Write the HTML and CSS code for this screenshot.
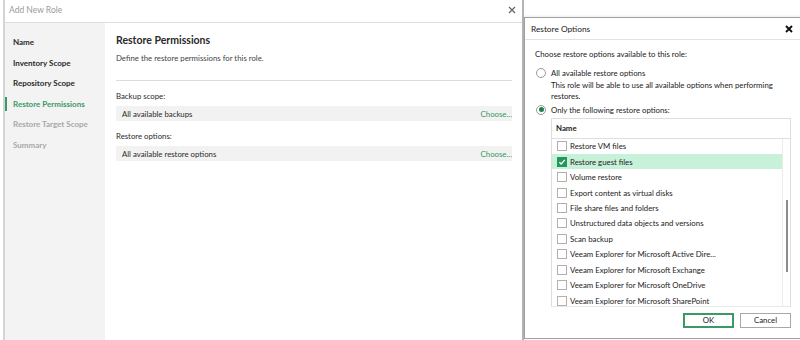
FILE: index.html
```html
<!DOCTYPE html>
<html>
<head>
<meta charset="utf-8">
<link rel="stylesheet" href="styles.css">
</head>
<body>
<div class="screen">
  <div class="wizard">
    <div class="wiz-title">
      <span class="wiz-title-text">Add New Role</span>
      <svg class="wiz-close" width="8" height="8" viewBox="0 0 8 8"><path d="M1 1L7 7M7 1L1 7" stroke="#6a6a6a" stroke-width="1.4"/></svg>
    </div>
    <div class="wiz-body">
      <nav class="steps">
        <div class="step done">Name</div>
        <div class="step done">Inventory Scope</div>
        <div class="step done">Repository Scope</div>
        <div class="step active">Restore Permissions</div>
        <div class="step todo">Restore Target Scope</div>
        <div class="step todo">Summary</div>
      </nav>
      <main class="content">
        <h1 class="page-title">Restore Permissions</h1>
        <p class="page-desc">Define the restore permissions for this role.</p>
        <div class="sep"></div>
        <div class="field-label">Backup scope:</div>
        <div class="field-row"><span>All available backups</span><span class="choose">Choose...</span></div>
        <div class="field-label">Restore options:</div>
        <div class="field-row"><span>All available restore options</span><span class="choose">Choose...</span></div>
      </main>
    </div>
  </div>
  <div class="modal-col">
    <div class="dialog">
      <div class="dlg-title">
        <span>Restore Options</span>
        <svg class="dlg-close" width="8" height="8" viewBox="0 0 8 8"><path d="M1 1L7 7M7 1L1 7" stroke="#111" stroke-width="1.9"/></svg>
      </div>
      <div class="dlg-body">
        <div class="intro">Choose restore options available to this role:</div>
        <div class="radio-row"><span class="radio"></span><span>All available restore options</span></div>
        <div class="radio-desc">This role will be able to use all available options when performing<br>restores.</div>
        <div class="radio-row"><span class="radio checked"></span><span>Only the following restore options:</span></div>
        <div class="list">
          <div class="list-head">Name</div>
          <div class="list-body">
            <div class="rows">
              <div class="row"><span class="cb"></span>Restore VM files</div>
              <div class="row sel"><span class="cb on"><svg width="8" height="8" viewBox="0 0 8 8"><path d="M1.4 4.2L3.2 6L6.8 1.8" fill="none" stroke="#fff" stroke-width="1.3"/></svg></span>Restore guest files</div>
              <div class="row"><span class="cb"></span>Volume restore</div>
              <div class="row"><span class="cb"></span>Export content as virtual disks</div>
              <div class="row"><span class="cb"></span>File share files and folders</div>
              <div class="row"><span class="cb"></span>Unstructured data objects and versions</div>
              <div class="row"><span class="cb"></span>Scan backup</div>
              <div class="row"><span class="cb"></span>Veeam Explorer for Microsoft Active Dire...</div>
              <div class="row"><span class="cb"></span>Veeam Explorer for Microsoft Exchange</div>
              <div class="row"><span class="cb"></span>Veeam Explorer for Microsoft OneDrive</div>
              <div class="row"><span class="cb"></span>Veeam Explorer for Microsoft SharePoint</div>
            </div>
            <div class="scroll"><div class="thumb"></div></div>
          </div>
        </div>
        <div class="buttons">
          <div class="btn primary">OK</div>
          <div class="btn">Cancel</div>
        </div>
      </div>
    </div>
  </div>
</div>
</body>
</html>
```

FILE: styles.css
```css
* { box-sizing: border-box; }
html, body { margin: 0; padding: 0; }
body {
  width: 800px;
  height: 340px;
  overflow: hidden;
  background: #fff;
  font-family: Lato, "Liberation Sans", sans-serif;
  font-size: 7.8px;
  color: #222;
}
.screen {
  display: flex;
  width: 800px;
  height: 340px;
}
.wizard {
  width: 521px;
  height: 340px;
  margin-left: 3px;
  border-left: 2px solid #d4d4d4;
  border-right: 2px solid #b4b4b4;
  display: flex;
  flex-direction: column;
  background: #fff;
  flex: none;
}
.wiz-title {
  height: 23px;
  border-bottom: 1px solid #dedede;
  display: flex;
  align-items: center;
  justify-content: space-between;
  padding: 0 6px 2px 4px;
}
.wiz-title-text {
  color: #9a9a9a;
  font-size: 8.5px;
}
.wiz-body {
  flex: 1;
  display: flex;
}
.steps {
  width: 100px;
  background: #f3f3f3;
  padding-top: 9px;
}
.step {
  height: 20.5px;
  line-height: 20.5px;
  padding-left: 8px;
  font-weight: 700;
  font-size: 8px;
  color: #2a2a2a;
  position: relative;
}
.step.active { color: #3a9a66; }
.step.active::before {
  content: "";
  position: absolute;
  left: 0;
  top: 3px;
  width: 2px;
  height: 14px;
  background: #3a9a66;
}
.step.todo { color: #a8a8a8; }
.content {
  flex: 1;
  padding: 10px 10px 0 11px;
}
.page-title {
  margin: 0;
  font-size: 10.5px;
  line-height: 14px;
  font-weight: 700;
  color: #2a2a2a;
}
.page-desc {
  margin: 5.5px 0 0 0;
  line-height: 11px;
  color: #444;
}
.sep {
  height: 1px;
  background: #dcdcdc;
  margin-top: 16.5px;
}
.field-label {
  margin-top: 9.5px;
  line-height: 11px;
  color: #2a2a2a;
}
.field-row {
  margin-top: 4.5px;
  height: 15px;
  background: #f2f2f2;
  display: flex;
  align-items: center;
  justify-content: space-between;
  padding-left: 6px;
  color: #2a2a2a;
}
.choose { color: #2f9a5f; }
.modal-col {
  flex: 1;
  padding-top: 17px;
  display: flex;
}
.dialog {
  width: 276px;
  height: 322px;
  border: 1px solid #a0a0a0;
  border-right: none;
  background: #fff;
  box-shadow: 0 -1px 2px rgba(0,0,0,0.08);
  display: flex;
  flex-direction: column;
}
.dlg-title {
  height: 22px;
  border-bottom: 1px solid #e2e2e2;
  display: flex;
  align-items: center;
  justify-content: space-between;
  padding: 0 7px 0 6px;
  font-size: 8.3px;
  color: #222;
}
.dlg-body {
  padding: 9px 9px 0 10px;
  display: flex;
  flex-direction: column;
}
.intro { line-height: 11px; }
.radio-row {
  display: flex;
  align-items: center;
  height: 11px;
  margin-top: 7px;
  margin-left: 1px;
}
.radio {
  width: 10px;
  height: 10px;
  border-radius: 50%;
  border: 1px solid #9a9a9a;
  margin-right: 5px;
  display: flex;
  align-items: center;
  justify-content: center;
  flex: none;
}
.radio.checked::after {
  content: "";
  width: 5px;
  height: 5px;
  border-radius: 50%;
  background: #1f7f4c;
}
.radio-desc {
  margin-left: 16px;
  line-height: 11px;
  margin-top: 2px;
}
.radio-row + .radio-desc + .radio-row { margin-top: 2px; }
.list {
  margin-left: 16px;
  margin-top: 2.5px;
  height: 189px;
  border: 1px solid #dedede;
  border-bottom-color: #e8e8e8;
  display: flex;
  flex-direction: column;
  overflow: hidden;
}
.list-head {
  height: 20px;
  flex: none;
  border-bottom: 1px solid #dedede;
  font-weight: 700;
  padding-left: 4px;
  line-height: 19px;
}
.list-body {
  flex: 1;
  display: flex;
  overflow: hidden;
}
.rows { flex: 1; overflow: hidden; }
.row {
  height: 15.45px;
  display: flex;
  align-items: center;
  padding-left: 5px;
  white-space: nowrap;
}
.row.sel { background: #c7f1d9; }
.cb {
  width: 10px;
  height: 10px;
  border: 1px solid #b0b0b0;
  background: #fff;
  margin-right: 3px;
  flex: none;
  display: flex;
  align-items: center;
  justify-content: center;
}
.cb.on {
  background: #23985a;
  border-color: #23985a;
}
.scroll {
  width: 8px;
  flex: none;
  border-left: 1px solid #ececec;
  display: flex;
  justify-content: center;
}
.thumb {
  width: 2px;
  height: 72px;
  margin-top: 61px;
  background: #8c8c8c;
}
.buttons {
  display: flex;
  justify-content: flex-end;
  gap: 6px;
  margin-top: 6px;
}
.btn {
  width: 51px;
  height: 15px;
  border: 1px solid #a8a8a8;
  display: flex;
  align-items: center;
  justify-content: center;
  color: #222;
}
.btn.primary {
  border: 2px solid #3a9a66;
}
```
